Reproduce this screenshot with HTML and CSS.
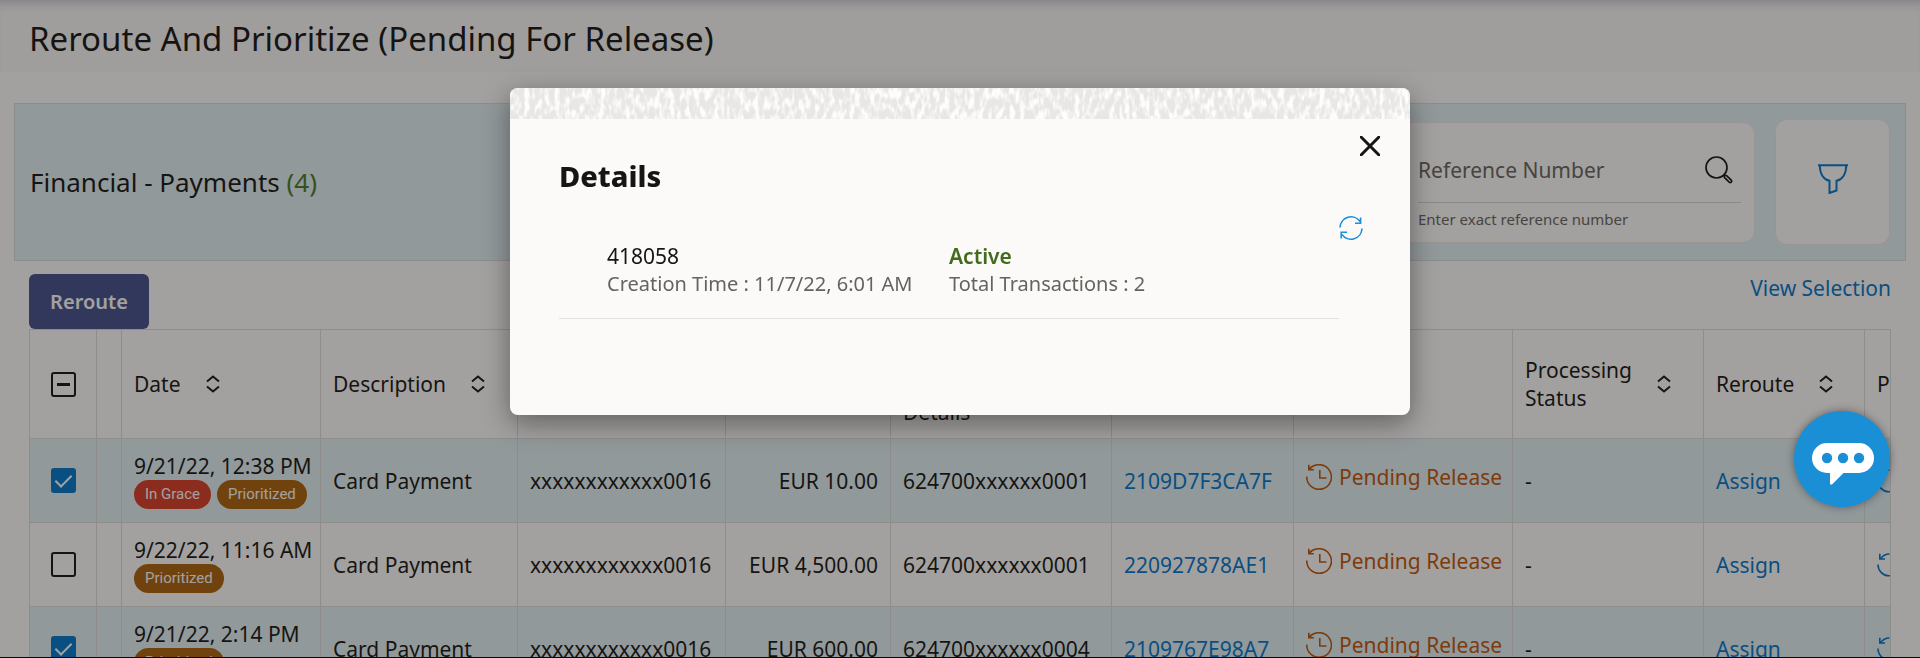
FILE: index.html
```html
<!DOCTYPE html>
<html lang="en">
<head>
    <meta charset="UTF-8">
    <meta name="viewport" content="width=device-width, initial-scale=1.0">
    <title>Reroute And Prioritize</title>
    <link rel="stylesheet" href="styles.css">
</head>
<body>
    <!-- Shared icons -->
    <svg class="sprite" aria-hidden="true">
        <symbol id="icon-sort" viewBox="0 0 14 18">
            <path d="M1 6.5L7 1.5L13 6.5M1 11.5L7 16.5L13 11.5" />
        </symbol>
        <symbol id="icon-pending" viewBox="0 0 26 26">
            <path d="M0.8 12.5A12.3 12.3 0 1 0 3.6 5.2M2.8 0.8V5.8H7.8M2.8 5.5C5 2.6 8.7 0.8 13 0.8M13.8 6V14H20.5" />
        </symbol>
        <symbol id="icon-refresh" viewBox="0 0 24 24">
            <path d="M1 11.5A11 11 0 0 1 21 5.5M21.6 1.5V7.2H16M23 12.5A11 11 0 0 1 3 18.5M2.2 22.5V16.2H8" />
        </symbol>
        <symbol id="icon-priority" viewBox="0 0 24 24">
            <path d="M1 11.5A11 11 0 1 0 23 12M3.5 6C5.4 3 8.7 1 12.5 1M2.8 0.8V6H8" />
        </symbol>
    </svg>

    <div class="page">
        <header class="title-bar">
            <h1>Reroute And Prioritize (Pending For Release)</h1>
        </header>
        <section class="panel">
            <h2>Financial - Payments <span class="count">(4)</span></h2>
            <div class="panel-tools">
                <div class="search-card">
                    <div class="search-row">
                        <input id="reference" type="text" placeholder="Reference Number" aria-label="Reference Number">
                        <button class="icon-btn" aria-label="Search">
                            <svg width="28" height="28" viewBox="0 0 28 28">
                                <circle cx="11.5" cy="11.5" r="10.5" />
                                <path d="M18.8 18.8L20.2 20.2M19.6 21.6C18.6 20.4 20.3 18.6 21.6 19.6L26.2 24.2C27.4 25.6 25.6 27.4 24.2 26.2Z" />
                            </svg>
                        </button>
                    </div>
                    <label class="hint" for="reference">Enter exact reference number</label>
                </div>
                <button class="filter-btn" aria-label="Filter">
                    <svg width="30" height="30" viewBox="0 0 30 30">
                        <path d="M0 1.2H30M1.8 1.2C1.8 9.5 5.5 15.5 11.5 16.8V29L18.5 26.5V16.8C24.5 15.5 28.2 9.5 28.2 1.2" />
                    </svg>
                </button>
            </div>
        </section>

        <div class="actions">
            <button class="reroute-btn">Reroute</button>
            <a href="#" class="view-link">View Selection</a>
        </div>

        <div class="table-wrap">
            <table>
                <colgroup>
                    <col class="col-check"><col class="col-flag"><col class="col-date"><col class="col-desc">
                    <col class="col-account"><col class="col-amount"><col class="col-credit"><col class="col-ref">
                    <col class="col-status"><col class="col-proc"><col class="col-reroute"><col class="col-prio">
                </colgroup>
                <thead>
                    <tr>
                        <th class="check"><input type="checkbox" class="mixed" aria-label="Select all"></th>
                        <th></th>
                        <th><div class="sortable">Date <svg class="sort"><use href="#icon-sort" /></svg></div></th>
                        <th><div class="sortable">Description <svg class="sort"><use href="#icon-sort" /></svg></div></th>
                        <th>Debit Account</th>
                        <th>Amount</th>
                        <th>Credit<br>Account<br>Details</th>
                        <th>Reference</th>
                        <th>Status</th>
                        <th><div class="sortable">Processing<br>Status <svg class="sort"><use href="#icon-sort" /></svg></div></th>
                        <th><div class="sortable">Reroute <svg class="sort"><use href="#icon-sort" /></svg></div></th>
                        <th>Prioritize</th>
                    </tr>
                </thead>
                <tbody>
                    <tr class="selected">
                        <td class="check"><input type="checkbox" aria-label="Select 2109D7F3CA7F" checked></td>
                        <td></td>
                        <td>9/21/22, 12:38 PM
                            <div class="badges"><span class="badge grace">In Grace</span><span class="badge">Prioritized</span></div>
                        </td>
                        <td>Card Payment</td>
                        <td>xxxxxxxxxxxx0016</td>
                        <td class="amount">EUR 10.00</td>
                        <td>624700xxxxxx0001</td>
                        <td><a href="#">2109D7F3CA7F</a></td>
                        <td><div class="status"><svg><use href="#icon-pending" /></svg>Pending Release</div></td>
                        <td>-</td>
                        <td><a href="#">Assign</a></td>
                        <td><a href="#" class="prio" aria-label="Prioritize"><svg><use href="#icon-priority" /></svg></a></td>
                    </tr>
                    <tr>
                        <td class="check"><input type="checkbox" aria-label="Select 220927878AE1"></td>
                        <td></td>
                        <td>9/22/22, 11:16 AM
                            <div class="badges"><span class="badge">Prioritized</span></div>
                        </td>
                        <td>Card Payment</td>
                        <td>xxxxxxxxxxxx0016</td>
                        <td class="amount">EUR 4,500.00</td>
                        <td>624700xxxxxx0001</td>
                        <td><a href="#">220927878AE1</a></td>
                        <td><div class="status"><svg><use href="#icon-pending" /></svg>Pending Release</div></td>
                        <td>-</td>
                        <td><a href="#">Assign</a></td>
                        <td><a href="#" class="prio" aria-label="Prioritize"><svg><use href="#icon-priority" /></svg></a></td>
                    </tr>
                    <tr class="selected">
                        <td class="check"><input type="checkbox" aria-label="Select 2109767E98A7" checked></td>
                        <td></td>
                        <td>9/21/22, 2:14 PM
                            <div class="badges"><span class="badge">Prioritized</span></div>
                        </td>
                        <td>Card Payment</td>
                        <td>xxxxxxxxxxxx0016</td>
                        <td class="amount">EUR 600.00</td>
                        <td>624700xxxxxx0004</td>
                        <td><a href="#">2109767E98A7</a></td>
                        <td><div class="status"><svg><use href="#icon-pending" /></svg>Pending Release</div></td>
                        <td>-</td>
                        <td><a href="#">Assign</a></td>
                        <td><a href="#" class="prio" aria-label="Prioritize"><svg><use href="#icon-priority" /></svg></a></td>
                    </tr>
                </tbody>
            </table>
        </div>
    </div>

    <div class="overlay">
        <div class="dialog" role="dialog" aria-labelledby="dialog-title">
            <svg class="texture" aria-hidden="true">
                <filter id="grain" x="0" y="0" width="100%" height="100%">
                    <feTurbulence type="fractalNoise" baseFrequency="0.2 0.09" numOctaves="2" seed="4" />
                    <feColorMatrix values="0 0 0 0 0.984  0 0 0 0 0.98  0 0 0 0 0.975  4 0 0 0 -1.7" />
                </filter>
                <rect width="100%" height="100%" filter="url(#grain)" />
            </svg>
            <div class="dialog-close">
                <button class="icon-btn" aria-label="Close">
                    <svg width="20" height="20" viewBox="0 0 20 20"><path d="M1 1L19 19M19 1L1 19" /></svg>
                </button>
            </div>
            <div class="dialog-body">
                <h2 id="dialog-title">Details</h2>
                <div class="dialog-refresh">
                    <button class="icon-btn" aria-label="Refresh"><svg width="24" height="24"><use href="#icon-refresh" /></svg></button>
                </div>
                <div class="details">
                    <div class="detail">
                        <div>418058</div>
                        <div class="sub">Creation Time : 11/7/22, 6:01 AM</div>
                    </div>
                    <div class="detail">
                        <div class="active">Active</div>
                        <div class="sub">Total Transactions : 2</div>
                    </div>
                </div>
            </div>
        </div>
    </div>

    <button class="chat-btn" aria-label="Open chat">
        <svg width="62" height="44" viewBox="0 0 62 44">
            <path d="M15 1H47A15 15 0 0 1 47 31H31.5L20.5 42Q18 44 18 41V31H15A15 15 0 0 1 15 1Z" fill="#fff" />
            <circle cx="15" cy="16" r="5.2" /><circle cx="31" cy="16" r="5.2" /><circle cx="47" cy="16" r="5.2" />
        </svg>
    </button>
</body>
</html>
```
FILE: styles.css
```css
* {
    box-sizing: border-box;
}
body {
    margin: 0;
    font-family: "Noto Sans", "Open Sans", sans-serif;
    font-size: 21px;
    line-height: 28px;
    color: #161513;
    background-color: #fbfaf8;
}
button, input {
    font-family: inherit;
}
a {
    color: #0274c9;
    text-decoration: none;
}
svg {
    fill: none;
    stroke: currentColor;
}
h1, h2 {
    margin: 0;
    font-weight: 400;
}
.sprite {
    display: none;
}
.page {
    height: 100vh;
    overflow: hidden;
    border-bottom: 1px solid #000;
}
.title-bar {
    padding: 19px 29px 13px;
    background-color: #f6f5f3;
    box-shadow: inset 0 10px 10px -7px #c4c2d0;
}
.title-bar h1 {
    font-size: 33px;
    line-height: 40px;
}
.panel {
    display: flex;
    align-items: center;
    justify-content: space-between;
    margin: 31px 14px 0;
    padding: 15px;
    background-color: #e0edf2;
    border: 1px solid #d2dadb;
}
.panel h2 {
    font-size: 26px;
    line-height: 36px;
}
.count {
    color: #4a7a22;
}
.panel-tools {
    display: flex;
    align-items: center;
    gap: 20px;
}
.search-card {
    width: 362px;
    padding: 22px 13px 12px 24px;
    background-color: #fbfaf8;
    border: 1px solid #e8e7e4;
    border-radius: 12px;
}
.search-row {
    display: flex;
    align-items: center;
    height: 58px;
    padding: 0 8px 6px 0;
    border-bottom: 1px solid #d4d3d1;
}
.search-row input {
    flex: 1;
    min-width: 0;
    padding: 0;
    border: none;
    background: none;
    font-size: 21px;
}
.search-row input::placeholder {
    color: #66635f;
    opacity: 1;
}
.icon-btn {
    display: flex;
    padding: 0;
    border: none;
    background: none;
    color: #161513;
    cursor: pointer;
}
.search-row svg {
    stroke-width: 1.7;
}
.hint {
    display: block;
    padding-top: 5px;
    font-size: 15px;
    line-height: 22px;
    color: #66635f;
}
.filter-btn {
    display: flex;
    align-items: center;
    justify-content: center;
    width: 115px;
    height: 126px;
    padding: 0 0 6px;
    background-color: #fbfaf8;
    border: 1px solid #e8e7e4;
    border-radius: 12px;
    color: #0274c9;
    cursor: pointer;
}
.filter-btn svg {
    stroke-width: 2;
}
.actions {
    display: flex;
    align-items: flex-start;
    justify-content: space-between;
    margin: 13px 29px 0;
}
.reroute-btn {
    height: 55px;
    width: 120px;
    padding: 0;
    background-color: #424f8c;
    border: none;
    border-radius: 6px;
    color: #fbfaf8;
    font-size: 20px;
    font-weight: 600;
    cursor: pointer;
}
.table-wrap {
    margin: 0 29px;
    border: 1px solid #d9d9d7;
    border-bottom: none;
    overflow: hidden;
}
table {
    table-layout: fixed;
    width: 1941px;
    border-collapse: separate;
    border-spacing: 0;
}
.col-check { width: 67px; }
.col-flag { width: 25px; }
.col-date { width: 199px; }
.col-desc { width: 197px; }
.col-account { width: 208px; }
.col-amount { width: 165px; }
.col-credit { width: 221px; }
.col-ref { width: 182px; }
.col-status { width: 219px; }
.col-proc { width: 191px; }
.col-reroute { width: 161px; }
.col-prio { width: 106px; }
th, td {
    padding: 0 12px;
    border-right: 1px solid #d9d9d7;
    border-bottom: 1px solid #d9d9d7;
    text-align: left;
    font-weight: 400;
    white-space: nowrap;
}
th {
    height: 109px;
}
td {
    height: 84px;
}
.selected {
    background-color: #e0edf2;
}
.check {
    padding: 0;
    text-align: center;
}
.check input {
    appearance: none;
    display: block;
    width: 25px;
    height: 25px;
    margin: 0 auto;
    border: 2px solid #161513;
    border-radius: 3px;
}
.check input:checked {
    border-color: #0274c9;
    background-color: #0274c9;
}
.check input:checked::after {
    content: "";
    display: block;
    width: 7px;
    height: 14px;
    margin: 1px auto 0;
    border: solid #fff;
    border-width: 0 2px 2px 0;
    transform: rotate(45deg);
}
.check .mixed::after {
    content: "";
    display: block;
    width: 13px;
    height: 3px;
    margin: 9px auto 0;
    background-color: #161513;
}
.sortable {
    display: flex;
    align-items: center;
    gap: 25px;
}
.sort {
    width: 14px;
    height: 18px;
    stroke-width: 2;
}
.badges {
    display: flex;
    gap: 6px;
}
.badge {
    padding: 0 11px;
    border-radius: 15px;
    background-color: #a8600b;
    color: #fbfaf8;
    font-family: Roboto, sans-serif;
    font-size: 15px;
    line-height: 29px;
}
.grace {
    background-color: #d63b27;
}
.amount {
    text-align: right;
}
.status {
    display: flex;
    align-items: center;
    gap: 7px;
    padding-bottom: 8px;
    color: #be5408;
}
.status svg {
    flex: none;
    width: 26px;
    height: 26px;
    stroke-width: 1.6;
}
.prio svg {
    display: block;
    width: 24px;
    height: 24px;
    stroke-width: 1.6;
}
.overlay {
    position: fixed;
    inset: 0;
    padding: 88px 16px 0;
    background-color: rgba(22, 21, 19, 0.39);
}
.dialog {
    max-width: 900px;
    margin: 0 auto;
    padding-bottom: 96px;
    background-color: #fbfaf8;
    border-radius: 8px;
    box-shadow: 0 8px 28px rgba(0, 0, 0, 0.4);
    overflow: hidden;
}
.texture {
    display: block;
    width: 100%;
    height: 31px;
    background-color: #e8e7e5;
    stroke: none;
}
.dialog-close {
    display: flex;
    justify-content: flex-end;
    padding: 17px 30px 0;
}
.dialog-close svg {
    stroke-width: 3;
    stroke-linecap: round;
}
.dialog-body {
    padding: 0 71px 0 49px;
}
.dialog-body h2 {
    font-size: 29px;
    font-weight: 800;
    line-height: 40px;
}
.dialog-refresh {
    display: flex;
    justify-content: flex-end;
    margin: 20px -24px 3px 0;
}
.dialog-refresh .icon-btn {
    color: #1a8fd6;
}
.dialog-refresh svg {
    stroke-width: 1.6;
}
.details {
    display: grid;
    grid-template-columns: 342px 1fr;
    padding: 0 0 21px 48px;
    border-bottom: 1px solid #e2e1df;
    line-height: 27px;
}
.sub {
    font-size: 20px;
    color: #66635f;
}
.active {
    color: #436b1d;
    font-weight: 600;
}
.chat-btn {
    position: fixed;
    right: 30px;
    top: 411px;
    display: flex;
    align-items: center;
    justify-content: center;
    width: 96px;
    height: 96px;
    padding: 10px 0 0 2px;
    border: none;
    border-radius: 50%;
    background-color: #1a8fd6;
    box-shadow: 0 0 8px rgba(0, 0, 0, 0.4);
    cursor: pointer;
}
.chat-btn svg {
    stroke: none;
}
.chat-btn circle {
    fill: #1a8fd6;
}
```
